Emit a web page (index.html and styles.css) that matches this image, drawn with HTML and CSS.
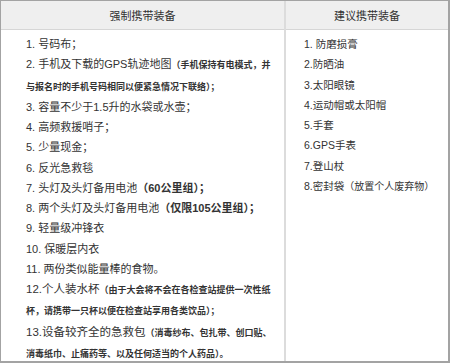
FILE: index.html
```html
<!DOCTYPE html>
<html lang="zh-CN">
<head>
<meta charset="utf-8">
<title>携带装备</title>
<link rel="stylesheet" href="styles.css">
</head>
<body>
<div class="box">
  <table class="gear">
    <thead>
      <tr>
        <th class="col-main">强制携带装备</th>
        <th class="col-side">建议携带装备</th>
      </tr>
    </thead>
    <tbody>
      <tr>
        <td class="col-main">
          <div class="item">1. 号码布；</div>
          <div class="item">2. 手机及下载的GPS轨迹地图<span class="note">（手机保持有电模式，并<br>与报名时的手机号码相同以便紧急情况下联络）；</span></div>
          <div class="item">3. 容量不少于1.5升的水袋或水壶；</div>
          <div class="item">4. 高频救援哨子；</div>
          <div class="item">5. 少量现金；</div>
          <div class="item">6. 反光急救毯</div>
          <div class="item">7. 头灯及头灯备用电池<b class="strong">（60公里组）；</b></div>
          <div class="item">8. 两个头灯及头灯备用电池<b class="strong">（仅限105公里组）；</b></div>
          <div class="item">9. 轻量级冲锋衣</div>
          <div class="item">10. 保暖层内衣</div>
          <div class="item">11. 两份类似能量棒的食物。</div>
          <div class="item big">12.个人装水杯<span class="note">（由于大会将不会在各检查站提供一次性纸<br>杯，请携带一只杯以便在检查站享用各类饮品）；</span></div>
          <div class="item big">13.设备较齐全的急救包<span class="note">（消毒纱布、包扎带、创口贴、<br>消毒纸巾、止痛药等、以及任何适当的个人药品）。</span></div>
        </td>
        <td class="col-side">
          <div class="item">1. 防磨损膏</div>
          <div class="item">2.防晒油</div>
          <div class="item">3.太阳眼镜</div>
          <div class="item">4.运动帽或太阳帽</div>
          <div class="item">5.手套</div>
          <div class="item">6.GPS手表</div>
          <div class="item">7.登山杖</div>
          <div class="item">8.密封袋<span class="aside">（放置个人废弃物）</span></div>
        </td>
      </tr>
    </tbody>
  </table>
</div>
</body>
</html>
```
FILE: styles.css
```css
html, body {
  margin: 0;
  padding: 0;
  background: #ffffff;
}

body {
  font-family: "Liberation Sans", Arial, "Noto Sans CJK SC", sans-serif;
  color: #333333;
}

.box {
  width: 450px;
  height: 363px;
  box-sizing: border-box;
  border: 1px solid #a3a3a3;
  border-right-width: 2px;
  border-bottom-width: 2px;
  overflow: hidden;
}

.gear {
  width: 100%;
  height: 100%;
  border-collapse: collapse;
  table-layout: fixed;
}

.gear th {
  height: 28px;
  padding: 0;
  background: #efefef;
  border-bottom: 1px solid #d6d6d6;
  font-weight: normal;
  font-size: 11px;
  text-align: center;
  vertical-align: middle;
}

.gear .col-main {
  width: 283px;
}

.gear .col-side {
  border-left: 2px solid #dcdcdc;
}

.gear td {
  vertical-align: top;
  padding-top: 4px;
  line-height: 20.27px;
}

.gear td.col-main {
  padding-left: 25px;
  font-size: 11px;
}

.gear td.col-side {
  padding-left: 18px;
  font-size: 10.5px;
}

.item {
  white-space: nowrap;
}

.big {
  font-size: 11.5px;
}

.note {
  font-size: 9px;
  font-weight: bold;
}

.strong {
  font-weight: bold;
}

.aside {
  font-size: 10px;
}
```
